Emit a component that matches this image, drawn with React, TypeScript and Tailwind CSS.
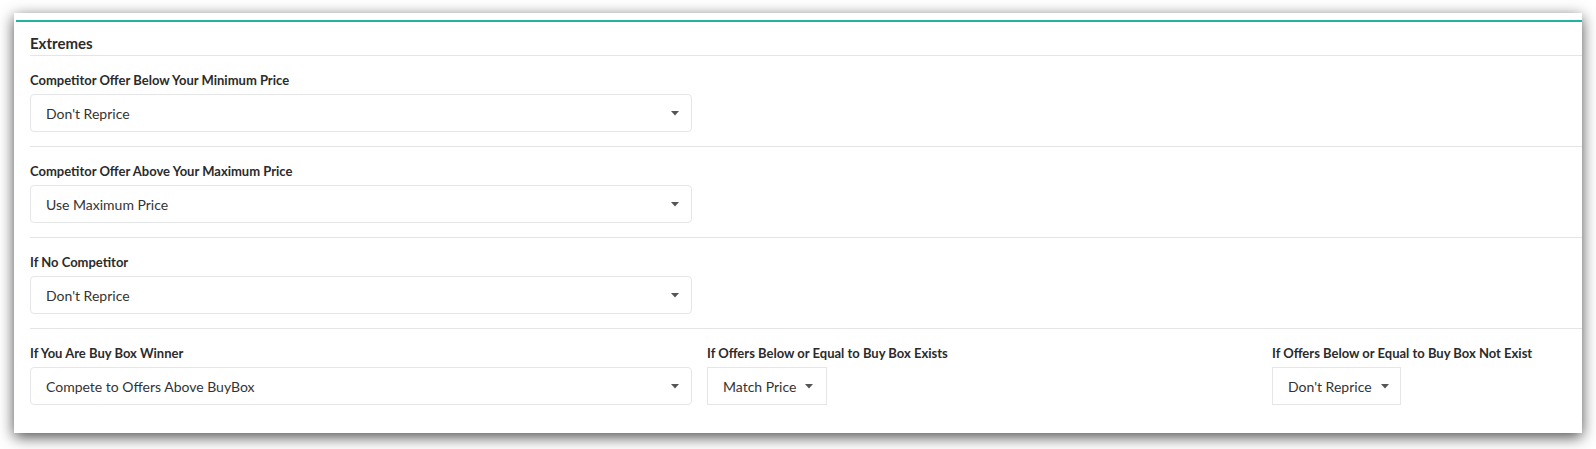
import React from "react";

type Opt = { label: string; value: string };

const sections: Opt[] = [
  { label: "Competitor Offer Below Your Minimum Price", value: "Don't Reprice" },
  { label: "Competitor Offer Above Your Maximum Price", value: "Use Maximum Price" },
  { label: "If No Competitor", value: "Don't Reprice" },
];

function Caret() {
  return (
    <svg width="8" height="5" viewBox="0 0 8 5" className="shrink-0">
      <path d="M0 0 L8 0 L4 4.5 Z" fill="#555" />
    </svg>
  );
}

function SelectBox({ value }: { value: string }) {
  return (
    <div className="w-[662px] h-[38px] rounded-[4px] border border-[#e5e6e7] bg-white flex items-center justify-between pl-[15px] pr-[12px] text-[14px] text-[#333]">
      <span>{value}</span>
      <Caret />
    </div>
  );
}

function DropButton({ value, w }: { value: string; w: string }) {
  return (
    <div
      className={`${w} h-[38px] border border-[#e5e6e7] bg-white flex items-center gap-[9px] pl-[15px] text-[14px] text-[#333]`}
    >
      <span>{value}</span>
      <Caret />
    </div>
  );
}

function Label({ children }: { children: React.ReactNode }) {
  return (
    <div className="h-[20px] leading-[20px] mb-[4px] text-[13px] font-bold text-[#2b2b2b] whitespace-nowrap">
      {children}
    </div>
  );
}

export default function App() {
  return (
    <div
      className="w-[1596px] h-[449px] bg-white pt-[13px] pl-[14px] overflow-hidden"
      style={{ fontFamily: "Lato, 'Open Sans', sans-serif" }}
    >
      <div className="w-[1568px] h-[420px] bg-white shadow-[0_4px_14px_rgba(0,0,0,0.7)] pt-[7px] pl-[2px]">
        <div className="border-t-2 border-[#20b2a3] pl-[14px]">
          {/* Header */}
          <div className="pt-[12px] pb-[3px] leading-[18px] text-[15px] font-bold text-[#2b2b2b] border-b border-[#e4e5e7]">
            Extremes
          </div>

          {sections.map((s) => (
            <div
              key={s.label}
              className="pt-[14px] pb-[14px] border-b border-[#e4e5e7]"
            >
              <Label>{s.label}</Label>
              <SelectBox value={s.value} />
            </div>
          ))}

          {/* Buy box row */}
          <div className="pt-[14px] flex">
            <div className="w-[677px]">
              <Label>If You Are Buy Box Winner</Label>
              <SelectBox value="Compete to Offers Above BuyBox" />
            </div>
            <div className="w-[565px]">
              <Label>If Offers Below or Equal to Buy Box Exists</Label>
              <DropButton value="Match Price" w="w-[120px]" />
            </div>
            <div>
              <Label>If Offers Below or Equal to Buy Box Not Exist</Label>
              <DropButton value="Don't Reprice" w="w-[129px]" />
            </div>
          </div>
        </div>
      </div>
    </div>
  );
}
